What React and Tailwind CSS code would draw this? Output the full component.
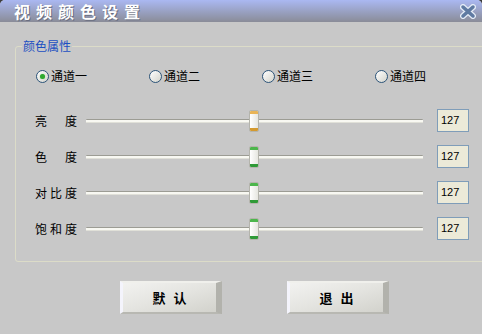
import React from 'react';

const cjk = { fontFamily: '"Noto Sans CJK SC", "DejaVu Sans", sans-serif' };

const channels = ['通道一', '通道二', '通道三', '通道四'];

const sliders = [
    { label: ['亮', '度'], value: 127, accent: 'orange' },
    { label: ['色', '度'], value: 127, accent: 'green' },
    { label: ['对', '比', '度'], value: 127, accent: 'green' },
    { label: ['饱', '和', '度'], value: 127, accent: 'green' },
];

function Radio({ checked, label }) {
    return (
        <div className="flex items-center gap-[2px] w-[113px]">
            <div className="w-[13px] h-[13px] rounded-full border border-[#2c5479] bg-linear-to-br from-[#ffffff] to-[#d4d4cc] flex items-center justify-center">
                {checked && <div className="w-[5px] h-[5px] rounded-full bg-[#2fa82f] shadow-[0_0_1px_#7ad47a]" />}
            </div>
            <span className="text-[12px] leading-[14px] text-black" style={cjk}>{label}</span>
        </div>
    );
}

function Slider({ value, accent }) {
    const left = Math.round((value / 255) * 327);
    const top = accent === 'orange' ? 'bg-[#e9b456]' : 'bg-[#4cb64c]';
    const bottom = accent === 'orange' ? 'bg-[#d49a30]' : 'bg-[#2f9a37]';
    return (
        <div className="relative w-[337px] h-[23px] flex items-center">
            <div className="w-full h-[4px] border-t border-[#9c9c94] bg-[#f8f8f2] border-b border-b-[#e0e0d8] rounded-[1px]" />
            <div
                className="absolute top-[1px] w-[10px] h-[22px] rounded-[2px] border border-[#b4b4ac] bg-linear-to-r from-[#ffffff] to-[#e6e6e0] flex flex-col justify-between overflow-hidden"
                style={{ left }}
            >
                <div className={`h-[3px] ${top}`} />
                <div className={`h-[3px] ${bottom}`} />
            </div>
        </div>
    );
}

function Button({ chars }) {
    return (
        <button className="w-[102px] h-[33px] flex items-center justify-center gap-[8px] bg-linear-to-br from-[#f2f2f0] via-[#e4e4e0] to-[#d2d2cc] border-l-[3px] border-l-[#f4f4fc] border-t-[2px] border-t-[#f0f0ec] border-r-[6px] border-r-[#b2b2ac] border-b-[2px] border-b-[#b8b8b2]">
            {chars.map((c) => (
                <span key={c} className="text-[13px] font-bold leading-none text-black" style={cjk}>{c}</span>
            ))}
        </button>
    );
}

export default function App() {
    return (
        <div className="w-[482px] h-[334px] bg-[#3c3c3c]">
            <div className="w-full h-full flex flex-col bg-[#c8c8c8] rounded-t-[5px] overflow-hidden">
                <div className="h-[22px] flex items-center justify-between pl-[14px] pr-[6px] bg-linear-to-b from-[#aab8f2] to-[#8a8c98]">
                    <span
                        className="text-[16px] leading-none tracking-[6px] text-white font-bold [text-shadow:1px_1px_0_#6a6e80]"
                        style={cjk}
                    >
                        视频颜色设置
                    </span>
                    <svg width="16" height="15" viewBox="0 0 16 15">
                        <path d="M3 3 L13 12 M13 3 L3 12" stroke="#e4ebf6" strokeWidth="6" strokeLinecap="round" />
                        <path d="M3 3 L13 12 M13 3 L3 12" stroke="#5f7aa2" strokeWidth="3.5" strokeLinecap="round" />
                    </svg>
                </div>

                <fieldset className="mt-[18px] ml-[15px] w-[464px] h-[222px] border border-[#dcdcc8] rounded-[3px] p-0 m-0 flex flex-col">
                    <legend className="ml-[6px] px-[1px] text-[12px] leading-[12px] text-[#1b4fc2]" style={cjk}>
                        颜色属性
                    </legend>
                    <div className="flex mt-[17px] pl-[20px]">
                        {channels.map((c, i) => (
                            <Radio key={c} label={c} checked={i === 0} />
                        ))}
                    </div>
                    <div className="flex flex-col gap-[13px] mt-[26px] pl-[19px]">
                        {sliders.map((s, i) => (
                            <div key={i} className="flex items-center h-[23px]">
                                <div className="w-[51px] flex">
                                    <div className="w-[42px] flex justify-between">
                                        {s.label.map((ch) => (
                                            <span key={ch} className="text-[12px] leading-none text-black" style={cjk}>{ch}</span>
                                        ))}
                                    </div>
                                </div>
                                <Slider value={s.value} accent={s.accent} />
                                <div
                                    className="ml-[14px] w-[32px] h-[23px] border border-[#7f9db9] bg-[#ecead8] pl-[3px] pt-[4px] text-[11px] leading-[12px] text-black"
                                    style={{ fontFamily: '"Liberation Sans", Arial, sans-serif' }}
                                >
                                    {s.value}
                                </div>
                            </div>
                        ))}
                    </div>
                </fieldset>

                <div className="flex gap-[65px] pl-[120px] mt-[19px]">
                    <Button chars={['默', '认']} />
                    <Button chars={['退', '出']} />
                </div>
            </div>
        </div>
    );
}
